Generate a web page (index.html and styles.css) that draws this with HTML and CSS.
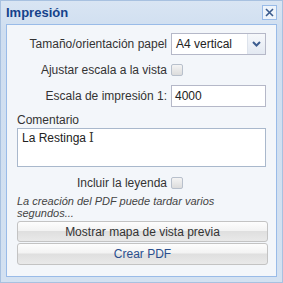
FILE: index.html
```html
<!DOCTYPE html>
<html lang="es">
<head>
    <meta charset="UTF-8">
    <title>Impresión</title>
    <link rel="stylesheet" href="styles.css">
</head>
<body>

<div class="window">
    <div class="window-header">
        <span class="window-title">Impresión</span>
        <span class="close-btn">
            <svg width="9" height="9" viewBox="0 0 9 9"><path d="M1 1L8 8M8 1L1 8" stroke="#3a5a8c" stroke-width="1.6"/></svg>
        </span>
    </div>

    <div class="window-body">
        <div class="row">
            <label class="row-label">Tamaño/orientación papel</label>
            <div class="select-box">
                <span class="select-value">A4 vertical</span>
                <span class="select-arrow">
                    <svg width="9" height="6" viewBox="0 0 9 6"><path d="M1 1L4.5 4.5L8 1" fill="none" stroke="#3c5d90" stroke-width="2"/></svg>
                </span>
            </div>
        </div>

        <div class="row">
            <label class="row-label">Ajustar escala a la vista</label>
            <span class="check"></span>
        </div>

        <div class="row">
            <label class="row-label">Escala de impresión 1:</label>
            <div class="text-box">4000</div>
        </div>

        <div class="comment">
            <label class="comment-label">Comentario</label>
            <div class="comment-box">La Restinga<span class="cursor">I</span></div>
        </div>

        <div class="row row-check">
            <label class="row-label">Incluir la leyenda</label>
            <span class="check"></span>
        </div>

        <p class="note">La creación del PDF puede tardar varios segundos...</p>

        <button class="btn">Mostrar mapa de vista previa</button>
        <button class="btn btn-primary">Crear PDF</button>
    </div>
</div>

</body>
</html>
```

FILE: styles.css
```css
body {
    margin: 0;
    padding: 0;
    font-family: 'Liberation Sans', Arial, sans-serif;
    font-size: 12px;
    color: #222;
    background: #ffffff;
}

.window {
    width: 283px;
    height: 283px;
    box-sizing: border-box;
    background: linear-gradient(#d9e5f3, #cfdef0 30px, #d3e1f1);
    border: 1px solid #a8c1e0;
    padding: 0 5px 5px 5px;
    display: flex;
    flex-direction: column;
}

.window-header {
    height: 23px;
    display: flex;
    align-items: center;
    justify-content: space-between;
}

.window-title {
    font-weight: bold;
    font-size: 13px;
    color: #15428b;
}

.close-btn {
    width: 13px;
    height: 13px;
    border: 1px solid #99bbe8;
    background: #eef4fb;
    display: flex;
    align-items: center;
    justify-content: center;
}

.window-body {
    flex: 1;
    background: #f3f6fa;
    border: 1px solid #99bbe8;
    padding: 8px 10px 0 10px;
    display: flex;
    flex-direction: column;
}

.row {
    display: flex;
    align-items: center;
    margin-bottom: 4px;
}

.row-label {
    width: 150px;
    text-align: right;
    padding-right: 4px;
    color: #333;
}

.select-box,
.text-box {
    width: 93px;
    height: 20px;
    border: 1px solid #b5b8c8;
    background: #fff;
    display: flex;
    align-items: center;
}

.select-value {
    flex: 1;
    padding-left: 4px;
}

.select-arrow {
    width: 17px;
    height: 20px;
    border-left: 1px solid #dde3ec;
    background: linear-gradient(#f6f8fb, #e3e9f2);
    display: flex;
    align-items: center;
    justify-content: center;
}

.text-box {
    padding-left: 3px;
    width: 90px;
}

.check {
    width: 10px;
    height: 10px;
    border: 1px solid #b8c0cc;
    border-radius: 2px;
    background: linear-gradient(#f4f4f4, #dcdcdc);
    margin: 5px 0;
}

.comment {
    display: flex;
    flex-direction: column;
    margin-top: 2px;
}

.comment-label {
    color: #333;
    margin-bottom: 1px;
}

.comment-box {
    height: 39px;
    border: 1px solid #a9b8cc;
    background: #fff;
    padding: 2px 4px;
    box-sizing: border-box;
}

.cursor {
    font-family: 'DejaVu Serif', serif;
    font-weight: 300;
    color: #333;
    margin-left: 3px;
}

.row-check {
    margin-top: 5px;
    margin-bottom: 1px;
}

.note {
    margin: 0 0 2px 0;
    font-style: italic;
    font-size: 11px;
    line-height: 12px;
    color: #444;
}

.btn {
    width: 251px;
    height: 21px;
    margin-bottom: 1px;
    border: 1px solid #c3c3c3;
    border-radius: 3px;
    background: linear-gradient(#fdfdfd 0%, #f3f3f3 45%, #dfdfdf 50%, #e9e9e9 100%);
    font-family: 'Liberation Sans', Arial, sans-serif;
    font-size: 12px;
    color: #333;
    padding: 0;
}

.btn-primary {
    height: 22px;
    color: #2a4f8e;
}
```
